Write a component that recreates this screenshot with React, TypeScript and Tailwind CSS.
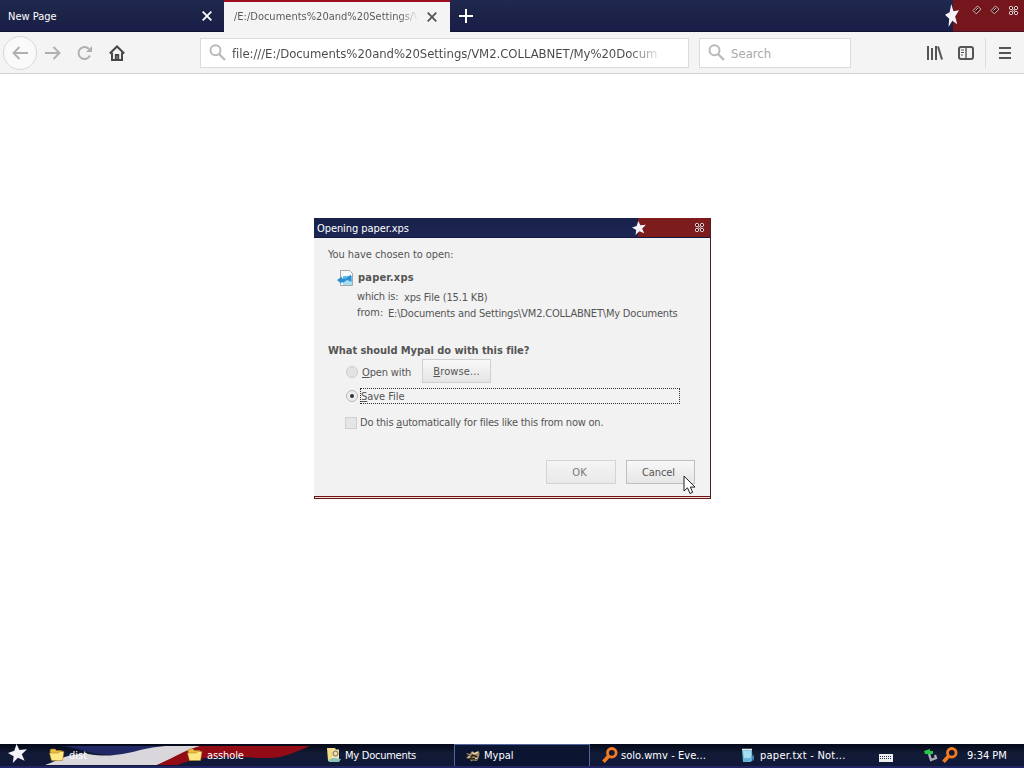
import { ReactNode } from "react";

const starPoints = "9,0 12,6.2 20,5.5 14.5,10.8 17.5,17.5 10.5,14.5 5,20 6,12.8 0,9.4 6.6,7.2";

function Star({ className }: { className: string }) {
  return (
    <svg viewBox="0 0 20 20" className={className} preserveAspectRatio="none">
      <polygon points={starPoints} fill="#f5f3fa" />
    </svg>
  );
}

function Cross({ color }: { color: string }) {
  return (
    <svg width="10" height="10" viewBox="0 0 10 10" stroke={color} strokeWidth="1.8">
      <path d="M.7.7l8.6 8.6M9.3.7L.7 9.3" />
    </svg>
  );
}

function Search() {
  return (
    <svg width="17" height="17" viewBox="0 0 17 17" fill="none" stroke="#b9b9b9" strokeWidth="2">
      <circle cx="6.5" cy="6.3" r="5" />
      <path d="M10 10l6 6" strokeWidth="2.3" />
    </svg>
  );
}

function CloseGlyph() {
  return (
    <svg width="11" height="11" viewBox="0 0 11 11" fill="#4a1013" stroke="#e6cfcf" strokeWidth="1">
      <circle cx="3" cy="3" r="1.7" />
      <circle cx="8" cy="3" r="1.7" />
      <circle cx="3" cy="8" r="1.7" />
      <circle cx="8" cy="8" r="1.7" />
      <circle cx="5.5" cy="5.5" r="1" />
    </svg>
  );
}

function SizeGlyph() {
  return (
    <svg width="10" height="10" viewBox="0 0 10 10" fill="#4a1013" stroke="#dcbcbc" strokeWidth="1">
      <path d="M5.5 1L9 4.2 4.3 8.8 1 5.5z" />
      <path d="M3.5 5.5L6 3" />
    </svg>
  );
}

function Folder() {
  return (
    <svg width="16" height="14" viewBox="0 0 16 14" stroke="#a87a1c" strokeWidth=".5">
      <path d="M1 2.5L2 1h4l1.5 1.5H13V12H2.5z" fill="#e9bd42" />
      <path d="M.5 5h9l1.5-1.5h4L13.5 12.5H2.5z" fill="#ffe883" />
    </svg>
  );
}

function Magnifier() {
  return (
    <svg width="16" height="16" viewBox="0 0 16 16" fill="none" stroke="#f47b20">
      <circle cx="9.8" cy="5.8" r="4.3" strokeWidth="2.8" />
      <path d="M6.5 9.2L1.5 14.7" strokeWidth="3.6" />
    </svg>
  );
}

function DocumentsIcon() {
  return (
    <svg width="16" height="16" viewBox="0 0 16 16">
      <path d="M1 1h8l1 2v11H2z" fill="#f4dc84" />
      <path d="M6 2.5h7V13H6z" fill="#e9e2c4" />
      <circle cx="9.5" cy="6.5" r="2.4" fill="none" stroke="#a48a48" strokeWidth="1.3" />
      <path d="M2 13l5-2 8 1-2 3H3z" fill="#8cc3b8" />
    </svg>
  );
}

function MypalIcon() {
  return (
    <svg width="16" height="16" viewBox="0 0 16 16">
      <path d="M1 5l4 1 2-3 3 2 4-2 .5 3L14 9l-2 4-4-.5-2 1-1-2.5-4-1 2-2z" fill="#a08a68" />
      <path d="M1.5 6.5l4 3L8 7l4 2M4 11l5-.5 3 1" fill="none" stroke="#261e18" strokeWidth="1.5" />
      <path d="M7 4.5l2 1.5 4-2M3 9h2.5M10 10.5h2" fill="none" stroke="#ead4aa" strokeWidth="1.4" />
    </svg>
  );
}

function NotepadIcon() {
  return (
    <svg width="14" height="15" viewBox="0 0 14 15">
      <path d="M1 1.5h10l.5 11-2 1.5H2z" fill="#68b7d8" />
      <path d="M2 3h8l.4 7H3z" fill="#a5def0" />
      <path d="M1 1.5h10" stroke="#e4edf0" strokeWidth="1.5" />
      <path d="M10 9l3-2v6z" fill="#3f87b4" />
    </svg>
  );
}

function TaskButton({ icon, className, children }: { icon: ReactNode; className: string; children: ReactNode }) {
  return (
    <div className={`flex h-[22px] shrink-0 items-center text-[11px] text-white ${className}`}>
      {icon}
      <span className="pt-[2px] whitespace-nowrap">{children}</span>
    </div>
  );
}

function TabBar() {
  return (
    <header className="flex h-8 bg-linear-to-b from-[#1f2850] via-[#1c2347] to-[#191c48] text-[11px]">
      <div className="flex w-[224px] items-center justify-between border-b border-[#11142f] pt-px pr-3 pl-2 text-white">
        <span className="pt-[3px]">New Page</span>
        <Cross color="#fff" />
      </div>
      <div className="flex w-[226px] items-center border-t-2 border-[#a00d20] bg-[#f4f4f4] pr-[13px] pl-[10px]">
        <span className="w-[184px] overflow-hidden bg-linear-to-r from-[#555] from-90% to-transparent bg-clip-text pt-px whitespace-nowrap text-transparent">
          /E:/Documents%20and%20Settings/V
        </span>
        <span className="ml-[9px]">
          <Cross color="#555" />
        </span>
      </div>
      <div className="flex flex-1 items-center border-b border-[#11142f] pl-[9px]">
        <svg width="14" height="14" viewBox="0 0 14 14" stroke="#fff" strokeWidth="2">
          <path d="M7 0v14M0 7h14" />
        </svg>
        <Star className="z-10 ml-auto h-[23px] w-[14px]" />
      </div>
      <div className="-ml-[6px] flex w-[71px] items-start justify-end gap-2 border-b border-[#4c1120] bg-[#74161b] pt-[5px] pr-[5px]">
        <SizeGlyph />
        <SizeGlyph />
        <CloseGlyph />
      </div>
    </header>
  );
}

function Toolbar() {
  return (
    <div className="flex h-[42px] items-center border-b border-[#d3d3d3] bg-[#f4f4f4] text-[13px]">
      <div className="ml-[3px] flex size-[34px] items-center justify-center rounded-full border border-[#d8d8d8] bg-[#fafafa]">
        <svg width="16" height="14" viewBox="0 0 16 14" fill="none" stroke="#b0b0b0" strokeWidth="1.9">
          <path d="M16 7H1.5M7.5 1l-6 6 6 6" />
        </svg>
      </div>
      <svg className="ml-2" width="16" height="14" viewBox="0 0 16 14" fill="none" stroke="#b0b0b0" strokeWidth="1.9">
        <path d="M0 7h14.5M8.5 1l6 6-6 6" />
      </svg>
      <svg className="ml-4" width="16" height="16" viewBox="0 0 16 16" fill="none" stroke="#b0b0b0" strokeWidth="1.9">
        <path d="M13 10.5A6 6 0 1 1 12 4" />
        <path d="M15 1v6H9z" fill="#b0b0b0" stroke="none" />
      </svg>
      <svg className="ml-4" width="16" height="16" viewBox="0 0 16 16" fill="none" stroke="#484848" strokeWidth="2">
        <path d="M.8 8.5L8 1.5l7.2 7" />
        <path d="M3 7.5V15h10V7.5" />
        <path d="M6.8 15v-5h2.4v5" />
      </svg>
      <div className="ml-[75px] flex h-[30px] w-[489px] items-center border border-[#dcdcdc] bg-white pl-2 text-[#484848]">
        <Search />
        <span className="ml-[6px] w-[431px] overflow-hidden bg-linear-to-r from-[#484848] from-92% to-transparent bg-clip-text pt-[2px] tracking-[-0.06px] whitespace-nowrap text-transparent">
          file:///E:/Documents%20and%20Settings/VM2.COLLABNET/My%20Docum
        </span>
      </div>
      <div className="ml-[10px] flex h-[30px] w-[152px] items-center border border-[#dcdcdc] bg-white pl-2 text-[#aaa]">
        <Search />
        <span className="ml-[6px] pt-[2px]">Search</span>
      </div>
      <svg className="ml-[76px]" width="16" height="14" viewBox="0 0 16 14" stroke="#555" strokeWidth="2">
        <path d="M1 0v14M5 2v12M9 0v14M11 .5l4 13" />
      </svg>
      <svg className="ml-[15px]" width="16" height="14" viewBox="0 0 16 14" fill="none" stroke="#555" strokeWidth="2">
        <rect x="1" y="1" width="14" height="12" rx="2" />
        <path d="M8 1v12" strokeWidth="1.4" />
        <path d="M3 4h3M3 6.5h3M3 9h2" strokeWidth="1" />
      </svg>
      <div className="ml-[11px] h-[30px] w-px bg-[#ddd]" />
      <svg className="ml-[13px]" width="12" height="12" viewBox="0 0 12 12" stroke="#555" strokeWidth="2">
        <path d="M0 1h12M0 6h12M0 11h12" />
      </svg>
    </div>
  );
}

function Dialog() {
  return (
    <section className="absolute top-[218px] left-[314px] h-[281px] w-[397px] border-r border-[#4a2025] bg-[#f2f2f2] text-[11px] leading-4 whitespace-nowrap text-[#555]">
      <div className="flex h-5 items-center border-b border-[#141a3d] bg-linear-to-b from-[#172149] to-[#1d2653] pl-[3px] text-white">
        <span className="pt-[2px] tracking-[-0.08px]">Opening paper.xps</span>
        <div className="ml-auto flex h-full w-[72px] items-center bg-[#7c1c1c]">
          <Star className="-ml-[6px] h-[14px] w-[14px] shrink-0" />
          <div className="flex flex-1 justify-end pr-[5px]">
            <CloseGlyph />
          </div>
        </div>
      </div>
      <div className="h-[258px] pt-[9px] pl-[14px]">
        <p className="tracking-[-0.06px]">You have chosen to open:</p>
        <div className="mt-[7px] flex h-4 items-center pl-[9px]">
          <svg width="17" height="16" viewBox="0 0 17 16">
            <path d="M3.5.5h9l3 3v12h-12z" fill="#f7fafc" stroke="#a5a5a5" />
            <path d="M6 6h9v9H6z" fill="#66bce8" />
            <path d="M0 10l5-3.5v2h4l5-4v8H4v1z" fill="#318fd0" />
            <path d="M6 13l4-3 5 2v3H6z" fill="#a8dcf2" />
          </svg>
          <b className="ml-1 tracking-[0.2px]">paper.xps</b>
        </div>
        <div className="mt-[3px] flex pl-[29px]">
          <span className="w-[47px] tracking-[-0.2px]">which is:</span>
          <span className="pt-px tracking-[-0.15px]">xps File (15.1 KB)</span>
        </div>
        <div className="flex pl-[29px]">
          <span className="-mt-px w-[31px]">from:</span>
          <span className="tracking-[-0.19px]">E:\Documents and Settings\VM2.COLLABNET\My Documents</span>
        </div>
        <b className="mt-[21px] block tracking-[-0.06px]">What should Mypal do with this file?</b>
        <div className="flex h-6 items-center pl-[18px]">
          <span className="mt-px size-3 rounded-full border border-[#ccc] bg-[#e3e3e3]" />
          <span className="ml-1 w-[60px] pt-[3px] tracking-[-0.15px]">
            <u>O</u>pen with
          </span>
          <button className="h-6 w-[69px] border border-[#d0d0d0] bg-linear-to-b from-[#f8f8f8] to-[#e5e5e5] pt-px tracking-[0.1px]">
            <u>B</u>rowse...
          </button>
        </div>
        <div className="mt-[5px] flex h-4 items-center pl-[18px]">
          <span className="flex size-3 items-center justify-center rounded-full border border-[#bbb] bg-[#eee]">
            <span className="size-1 rounded-full bg-[#333]" />
          </span>
          <span className="ml-[2px] h-4 w-[320px] border border-dotted border-[#333] pt-px leading-[14px] tracking-[-0.05px]">
            <u>S</u>ave File
          </span>
        </div>
        <div className="mt-[11px] flex h-4 items-center pl-[17px]">
          <span className="size-3 border border-[#d0d0d0] bg-[#e5e5e5]" />
          <span className="ml-[3px] tracking-[-0.22px]">
            Do this <u>a</u>utomatically for files like this from now on.
          </span>
        </div>
        <div className="mt-[29px] flex justify-end gap-[10px] pr-[15px]">
          <button className="h-6 w-[70px] border border-[#d4d4d4] bg-linear-to-b from-[#f5f5f5] to-[#e9e9e9] pt-px text-[#777]">
            <span className="-ml-[3px]">OK</span>
          </button>
          <button className="h-6 w-[69px] border border-[#bfbfbf] bg-linear-to-b from-[#f8f8f8] to-[#e6e6e6] pt-px">
            <span className="-ml-1 tracking-[-0.1px]">Cancel</span>
          </button>
        </div>
      </div>
      <div className="h-[3px] border-y border-l border-[#6d1515] bg-[#f2dfdc]" />
    </section>
  );
}

function Taskbar() {
  return (
    <footer className="relative h-6 bg-linear-to-b from-[#050918] via-[#121b36] via-40% to-[#11183a]">
      <svg className="absolute top-0 left-0" width="330" height="24" viewBox="0 1 330 24">
        <path d="M60 3C75 3 90 12 112 12C140 12 150 3 175 3H60z" fill="#202866" />
        <path d="M45 22C60 17 66 10 88 11C125 17 139 3 170 3H201L157 22z" fill="#d9d7dc" />
        <path d="M157 22C175 14 183 8 200 3H310C292 10 283 16 263 15C233 14 227 13 206 15C189 17 183 20 178 22z" fill="#930b14" />
      </svg>
      <div className="relative flex h-full items-center border-b-2 border-[#202566]">
        <Star className="mb-1 ml-2 h-[19px] w-[19px] shrink-0" />
        <TaskButton className="ml-[22px] w-[138px] gap-1" icon={<Folder />}>dist</TaskButton>
        <TaskButton className="w-[138px] gap-1 tracking-[-0.1px]" icon={<Folder />}>asshole</TaskButton>
        <TaskButton className="w-[129px] gap-[3px] pl-px tracking-[-0.25px]" icon={<DocumentsIcon />}>My Documents</TaskButton>
        <TaskButton className="w-[136px] gap-[3px] border-x border-t border-[#50639a] bg-[#0b1431] pl-[10px]" icon={<MypalIcon />}>Mypal</TaskButton>
        <TaskButton className="w-[139px] gap-[3px] pl-[12px] tracking-[0.05px]" icon={<Magnifier />}>solo.wmv - Eve...</TaskButton>
        <TaskButton className="w-[139px] gap-[5px] pl-[12px] tracking-[0.25px]" icon={<NotepadIcon />}>paper.txt - Not...</TaskButton>
        <svg className="mt-[6px] ml-[11px]" width="14" height="8" viewBox="0 0 14 8">
          <rect width="14" height="8" fill="#eee" />
          <path d="M1 2.5h12M1 4.5h12" stroke="#28304b" strokeDasharray="1 1" />
        </svg>
        <svg className="ml-[31px]" width="14" height="14" viewBox="0 0 14 14">
          <path d="M5 6l2 6 5-2-1-3" fill="none" stroke="#b0b0b8" strokeWidth="2.3" />
          <path d="M0 3l6-2v2h3v3H7v2L5 6H1z" fill="#29c64b" />
        </svg>
        <span className="ml-1">
          <Magnifier />
        </span>
        <span className="ml-[9px] pt-[3px] text-[11px] text-white">9:34 PM</span>
      </div>
    </footer>
  );
}

export default function App() {
  return (
    <div className="relative flex h-screen w-[1024px] flex-col overflow-hidden bg-white font-['DejaVu_Sans_Condensed','DejaVu_Sans',sans-serif]">
      <TabBar />
      <Toolbar />
      <main className="flex-1" />
      <Taskbar />
      <Dialog />
      <svg className="absolute top-[475px] left-[683px]" width="13" height="20" viewBox="0 0 13 20">
        <path d="M1 1v15l3.5-3.2L7 18.5l2.7-1.2-2.4-5.2H12z" fill="#fff" stroke="#222" />
      </svg>
    </div>
  );
}
